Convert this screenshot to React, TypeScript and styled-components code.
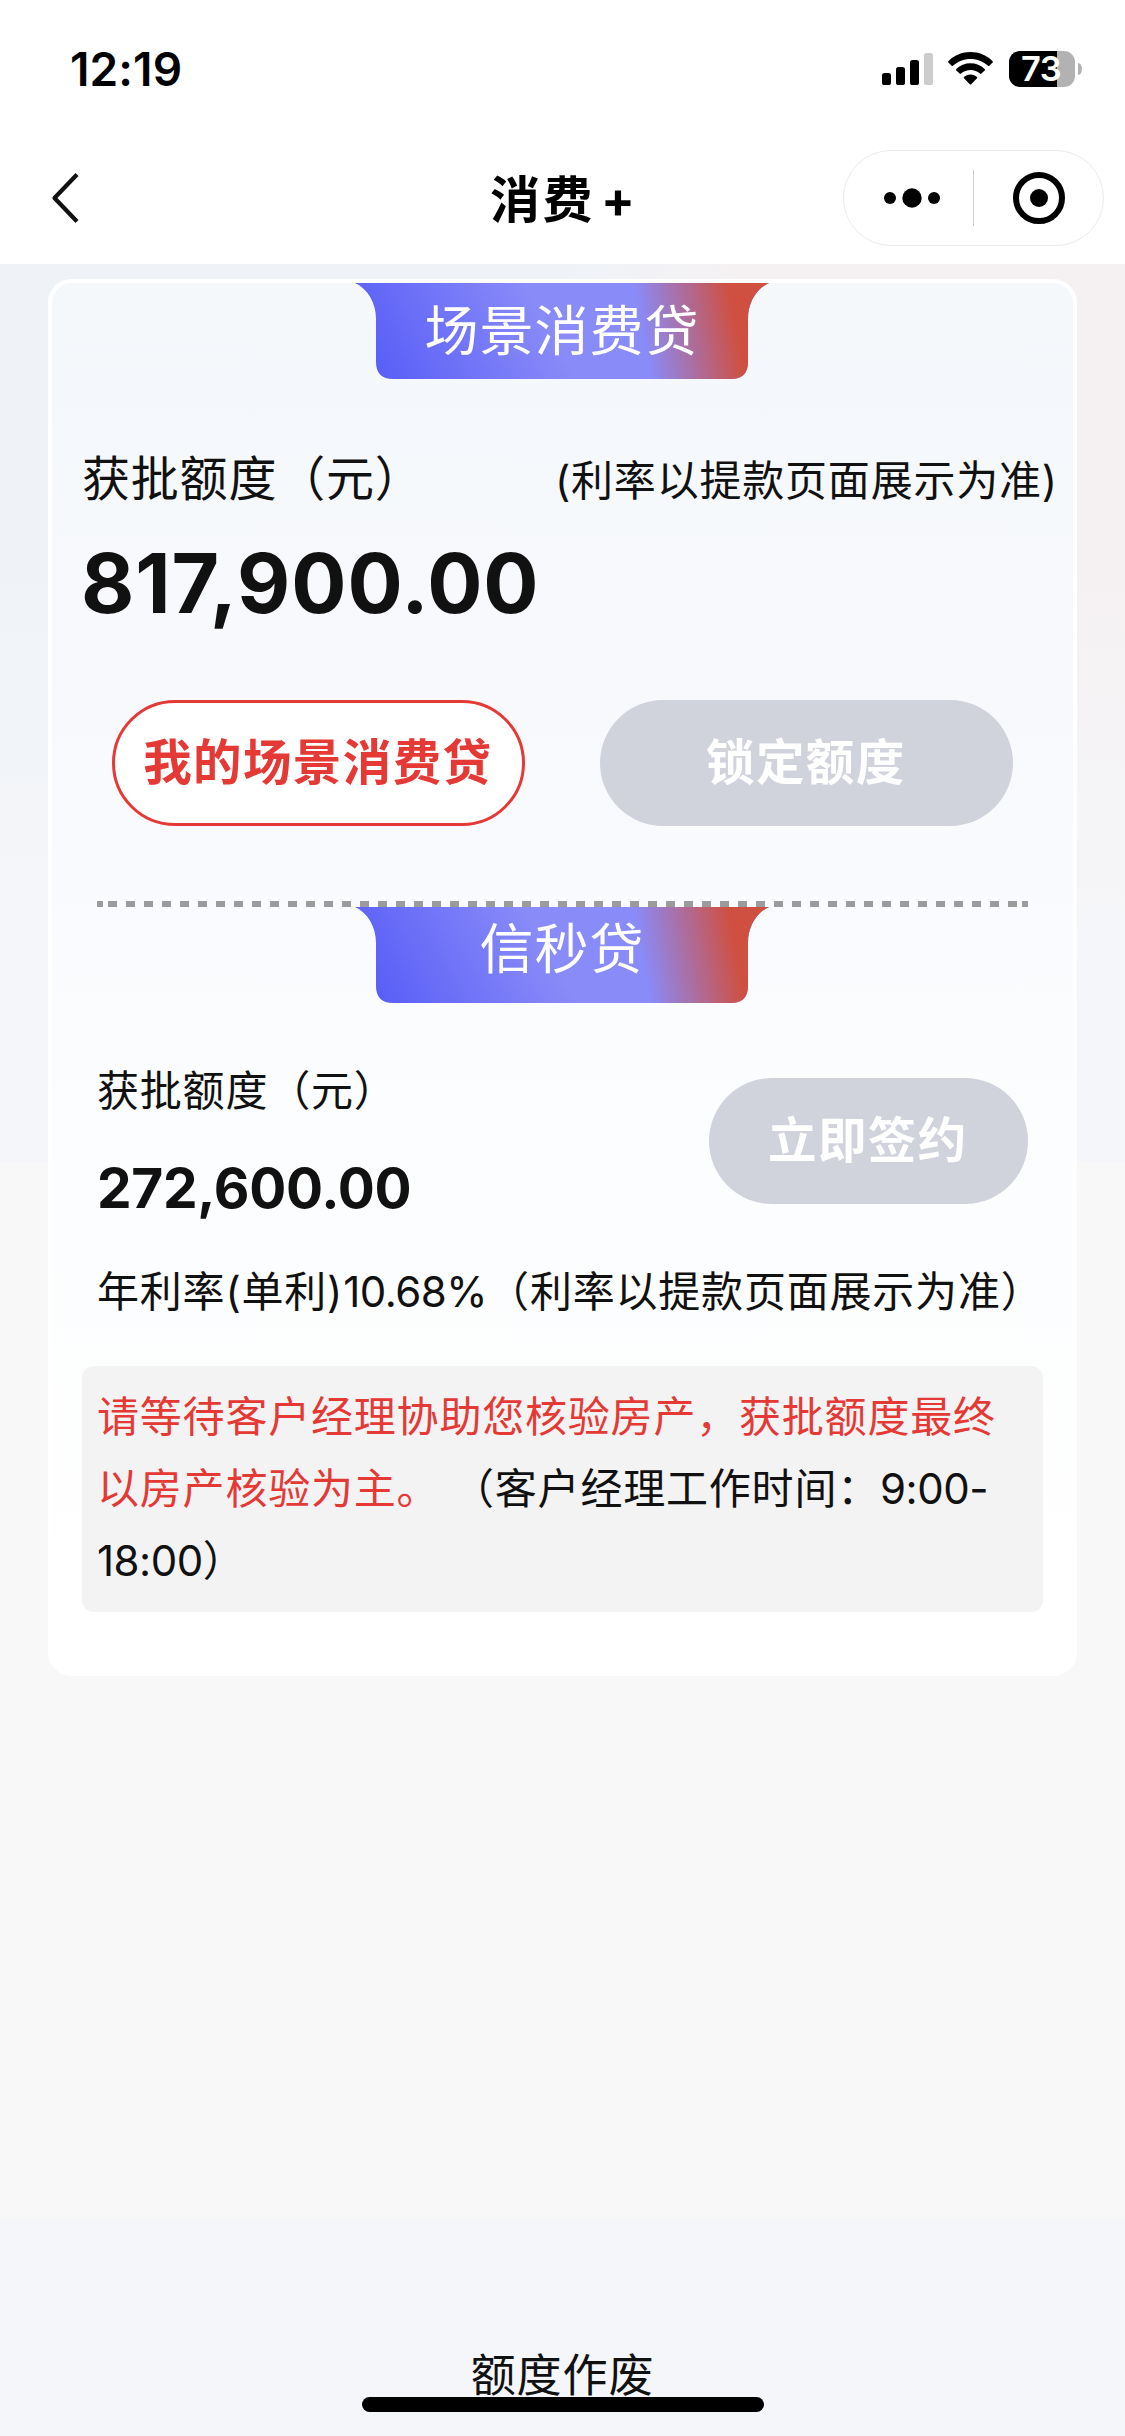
import React from 'react';
import styled, { createGlobalStyle } from 'styled-components';

const GlobalStyle = createGlobalStyle`
  * { box-sizing: border-box; }
  body {
    margin: 0;
    background: #f8f8f8;
    font-family: Inter, "Noto Sans CJK SC", sans-serif;
    color: #111;
  }
  button { font-family: inherit; padding: 0; margin: 0; }
`;

const Screen = styled.div`
  width: 1125px;
  height: 2436px;
  display: flex;
  flex-direction: column;
  background: #f8f8f8;
  overflow: hidden;
`;

const StatusBar = styled.header`
  height: 132px;
  flex: none;
  display: flex;
  justify-content: space-between;
  background: #fff;
  padding: 0 43px 0 70px;
`;

const Clock = styled.time`
  margin-top: 41px;
  font-size: 46px;
  line-height: 56px;
  font-weight: 600;
  letter-spacing: 0.1px;
  color: #000;
`;

const StatusIcons = styled.div`
  display: flex;
  align-items: flex-start;
  padding-top: 51px;
  height: 88px;
`;

const SignalIcon = styled.svg`
  margin: 2px 15px 0 0;
`;

const WifiIcon = styled.svg`
  margin: 1px 16px 0 0;
`;

const Battery = styled.div`
  width: 66px;
  height: 36px;
  border-radius: 11px;
  background: linear-gradient(90deg, #000 48px, #b2b2b2 48px);
  color: #fff;
  font-size: 34.5px;
  line-height: 36px;
  font-weight: 600;
  padding-left: 12px;
  letter-spacing: -0.6px;
`;

const BatteryTip = styled.div`
  width: 4px;
  height: 12px;
  margin: 12px 0 0 3px;
  border-radius: 0 4px 4px 0 / 0 6px 6px 0;
  background: #b2b2b2;
`;

const NavBar = styled.nav`
  height: 132px;
  flex: none;
  display: grid;
  grid-template-columns: 300px 1fr 300px;
  align-items: center;
  background: #fff;
`;

const BackButton = styled.button`
  display: flex;
  border: 0;
  background: none;
  padding-left: 50px;
`;

const NavTitle = styled.h1`
  margin: 0;
  padding-top: 3px;
  text-align: center;
  font-size: 50px;
  line-height: 60px;
  font-weight: 700;
  letter-spacing: 2.5px;
  color: #000;
`;

const TitlePlus = styled.span`
  margin-left: 6px;
  letter-spacing: 0;
`;

const Capsule = styled.div`
  justify-self: end;
  margin-right: 21px;
  width: 261px;
  height: 96px;
  border: 1.5px solid #ebebeb;
  border-radius: 48px;
  display: flex;
  align-items: center;
`;

const CapsuleDivider = styled.div`
  width: 1px;
  height: 56px;
  background: #cfcfcf;
`;

const CapsuleCell = styled.div<{ $inset?: number }>`
  width: 129px;
  padding-left: ${(p) => p.$inset ?? 0}px;
  display: flex;
  justify-content: center;
`;

const Content = styled.main`
  flex: 1;
  padding: 15px 48px 0;
  background:
    linear-gradient(180deg, rgba(245, 246, 249, 0) 300px, #f5f6f9 680px) 0 0 / 100% 898px no-repeat,
    linear-gradient(90deg, #eff3f8 0%, #eff3f8 50%, #f5f1f3 66%, #f5f1f2 100%) 0 0 / 100% 898px no-repeat,
    #f8f8f8;
`;

const Card = styled.section`
  width: 1029px;
  height: 1397px;
  border: 4px solid #fff;
  border-radius: 24px;
  background: linear-gradient(180deg, #f4f8fb 0%, #f8f9fd 32%, #fcfdfe 65%, #fff 100%);
  display: flex;
  flex-direction: column;
`;

const Ribbon = styled.div`
  display: grid;
  width: 414px;
  height: 96px;
  margin-left: 303px;
  flex: none;
`;

const RibbonShape = styled.svg`
  grid-area: 1 / 1;
  display: block;
`;

const RibbonLabel = styled.h2<{ $drop: number }>`
  grid-area: 1 / 1;
  z-index: 1;
  margin: 0;
  padding-top: ${(p) => p.$drop}px;
  text-align: center;
  color: #fff;
  font-size: 54px;
  line-height: 60px;
  font-weight: 400;
  letter-spacing: 1px;
`;

const QuotaHeader = styled.div`
  display: flex;
  justify-content: space-between;
  align-items: baseline;
  margin-top: 66px;
  height: 71px;
  padding: 0 15px 0 30px;
`;

const Label = styled.span<{ $size: number }>`
  font-size: ${(p) => p.$size}px;
  line-height: 1.4;
  letter-spacing: 0.8px;
  white-space: nowrap;
  font-weight: 400;
`;

const Figures = styled.span`
  letter-spacing: -0.5px;
`;

const Amount = styled.strong<{ $size: number; $spacing: number }>`
  font-size: ${(p) => p.$size}px;
  line-height: 1.2;
  font-weight: 700;
  letter-spacing: ${(p) => p.$spacing}px;
`;

const MainAmount = styled.div`
  margin-top: 19px;
  padding-left: 29px;
  height: 99px;
`;

const ButtonRow = styled.div`
  margin-top: 66px;
  padding: 0 60px;
  display: flex;
  justify-content: space-between;
`;

const PillButton = styled.button<{ $width: number; $outlined?: boolean }>`
  width: ${(p) => p.$width}px;
  height: 126px;
  border-radius: 63px;
  border: ${(p) => (p.$outlined ? '3px solid #e53935' : '0')};
  background: ${(p) => (p.$outlined ? '#fff' : '#d0d2dc')};
  color: ${(p) => (p.$outlined ? '#e53935' : '#fff')};
  font-size: 48.5px;
  line-height: 60px;
  font-weight: 700;
  letter-spacing: 1.4px;
  text-indent: -1.4px;
`;

const DashedRule = styled.div`
  width: 931px;
  height: 6px;
  flex: none;
  margin: 75px 0 0 45px;
  background:
    linear-gradient(#9b9b9b, #9b9b9b) 0 0 / 6px 6px no-repeat,
    linear-gradient(#9b9b9b, #9b9b9b) 100% 0 / 6px 6px no-repeat,
    repeating-linear-gradient(90deg, #9b9b9b 0 9px, transparent 9px 18px) 11px 0 / 909px 6px no-repeat;
`;

const SignRow = styled.div`
  margin-top: 59px;
  padding: 0 45px;
  display: flex;
  justify-content: space-between;
`;

const SignInfo = styled.div`
  display: flex;
  flex-direction: column;
  gap: 34px;
`;

const SignAction = styled.div`
  padding-top: 16px;
`;

const RateLine = styled.p`
  margin: 0;
  padding: 42px 45px 0;
`;

const Notice = styled.p`
  margin: 44px 0 0 30px;
  width: 961px;
  height: 246px;
  padding: 15px;
  border-radius: 12px;
  background: #f3f3f3;
  font-size: 42px;
  line-height: 72px;
  letter-spacing: 0.8px;
`;

const Warning = styled.span`
  color: #e53935;
`;

const Footer = styled.footer`
  height: 217px;
  flex: none;
  background: #f4f6fa;
  display: flex;
  flex-direction: column;
  align-items: center;
`;

const VoidLink = styled.a`
  margin-top: 124px;
  height: 54px;
  font-size: 45px;
  line-height: 66px;
  letter-spacing: 0.9px;
`;

const HomeIndicator = styled.div`
  z-index: 1;
  width: 402px;
  height: 15px;
  border-radius: 8px;
  background: #000;
`;

function TitleRibbon({ id, drop, children }: { id: string; drop: number; children: React.ReactNode }) {
  return (
    <Ribbon>
      <RibbonShape width="414" height="96" viewBox="0 0 414 96">
        <defs>
          <linearGradient id={`${id}-blue`} gradientUnits="userSpaceOnUse" x1="20" y1="80" x2="170" y2="0">
            <stop offset="0" stopColor="#5a5ff7" />
            <stop offset="1" stopColor="#898bf8" />
          </linearGradient>
          <linearGradient id={`${id}-red`} gradientUnits="userSpaceOnUse" x1="278" y1="0" x2="370" y2="-17">
            <stop offset="0" stopColor="#cf5040" stopOpacity="0" />
            <stop offset="1" stopColor="#cf5040" />
          </linearGradient>
          <clipPath id={`${id}-clip`}>
            <path d="M0 0H414C401 6 393 20 393 36V79Q393 96 376 96H38Q21 96 21 79V36C21 20 13 6 0 0Z" />
          </clipPath>
        </defs>
        <g clipPath={`url(#${id}-clip)`}>
          <rect width="414" height="96" fill={`url(#${id}-blue)`} />
          <rect width="414" height="96" fill={`url(#${id}-red)`} />
        </g>
      </RibbonShape>
      <RibbonLabel $drop={drop}>{children}</RibbonLabel>
    </Ribbon>
  );
}

export default function App() {
  return (
    <>
      <GlobalStyle />
      <Screen>
        <StatusBar>
          <Clock>12:19</Clock>
          <StatusIcons>
            <SignalIcon width="51" height="32" viewBox="0 0 51 32">
              <rect x="0" y="20" width="9" height="12" rx="2.6" />
              <rect x="14" y="14" width="9" height="18" rx="2.6" />
              <rect x="28" y="7" width="9" height="25" rx="2.6" />
              <rect x="42" y="0" width="9" height="32" rx="2.6" fill="#ccc" />
            </SignalIcon>
            <WifiIcon width="45" height="33" viewBox="0 0 45 33">
              <path d="M22.5 0C31 0 39 3.3 44.6 9.2Q45.2 9.9 44.6 10.6L41.4 13.8Q40.7 14.4 40 13.8C35.3 9.3 29.1 6.9 22.5 6.9S9.7 9.3 5 13.8Q4.3 14.4 3.6 13.8L.4 10.6Q-.2 9.9 .4 9.2C6 3.3 14 0 22.5 0Z" />
              <path d="M22.5 11.3C27.9 11.3 32.9 13.3 36.7 17Q37.3 17.7 36.7 18.4L33.4 21.6Q32.7 22.2 32 21.6C29.4 19.3 26.1 18.1 22.5 18.1S15.6 19.3 13 21.6Q12.3 22.2 11.6 21.6L8.3 18.4Q7.7 17.7 8.3 17C12.1 13.3 17.1 11.3 22.5 11.3Z" />
              <path d="M22.5 22.5C25 22.5 27.3 23.4 29 24.9Q29.6 25.6 29 26.2L23.2 32.2Q22.5 32.8 21.8 32.2L16 26.2Q15.4 25.6 16 24.9C17.7 23.4 20 22.5 22.5 22.5Z" />
            </WifiIcon>
            <Battery>73</Battery>
            <BatteryTip />
          </StatusIcons>
        </StatusBar>
        <NavBar>
          <BackButton aria-label="返回">
            <svg width="32" height="54" viewBox="0 0 32 54">
              <path d="M27 3.5 4.5 27 27 50.5" fill="none" stroke="#111" strokeWidth="4.2" strokeLinejoin="round" />
            </svg>
          </BackButton>
          <NavTitle>
            消费<TitlePlus>+</TitlePlus>
          </NavTitle>
          <Capsule>
            <CapsuleCell $inset={6}>
              <svg width="58" height="20" viewBox="0 0 58 20">
                <circle cx="7" cy="10" r="6" />
                <circle cx="29" cy="10" r="9.7" />
                <circle cx="51" cy="10" r="6" />
              </svg>
            </CapsuleCell>
            <CapsuleDivider />
            <CapsuleCell>
              <svg width="54" height="54" viewBox="0 0 54 54">
                <circle cx="27" cy="27" r="23" fill="none" stroke="#000" strokeWidth="6" />
                <circle cx="27" cy="27" r="9" />
              </svg>
            </CapsuleCell>
          </Capsule>
        </NavBar>
        <Content>
          <Card>
            <TitleRibbon id="scene" drop={19}>场景消费贷</TitleRibbon>
            <QuotaHeader>
              <Label $size={48}>获批额度（元）</Label>
              <Label $size={42}>(利率以提款页面展示为准)</Label>
            </QuotaHeader>
            <MainAmount>
              <Amount $size={82} $spacing={0.9}>817,900.00</Amount>
            </MainAmount>
            <ButtonRow>
              <PillButton $width={413} $outlined>我的场景消费贷</PillButton>
              <PillButton $width={413}>锁定额度</PillButton>
            </ButtonRow>
            <DashedRule />
            <TitleRibbon id="credit" drop={13}>信秒贷</TitleRibbon>
            <SignRow>
              <SignInfo>
                <Label $size={42}>获批额度（元）</Label>
                <Amount $size={55} $spacing={-0.3}>272,600.00</Amount>
              </SignInfo>
              <SignAction>
                <PillButton $width={319}>立即签约</PillButton>
              </SignAction>
            </SignRow>
            <RateLine>
              <Label $size={42}>
                年利率(单利)<Figures>10.68%</Figures>（利率以提款页面展示为准）
              </Label>
            </RateLine>
            <Notice>
              <Warning>请等待客户经理协助您核验房产，获批额度最终以房产核验为主。</Warning> （客户经理工作时间：
              <Figures>9:00-</Figures>
              <Figures>18:00</Figures>）
            </Notice>
          </Card>
        </Content>
        <Footer>
          <VoidLink>额度作废</VoidLink>
          <HomeIndicator />
        </Footer>
      </Screen>
    </>
  );
}
